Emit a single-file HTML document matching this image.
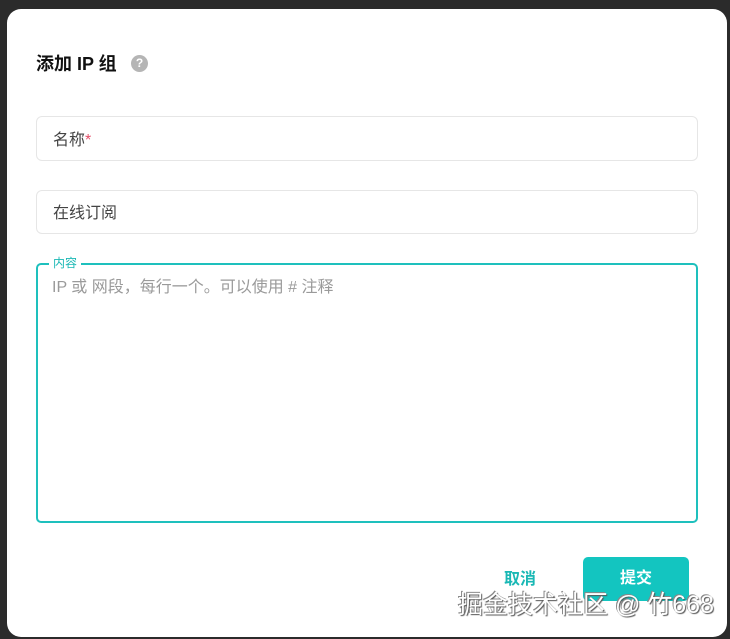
<!DOCTYPE html>
<html><head><meta charset="utf-8"><style>
*{box-sizing:border-box;margin:0;padding:0}
html,body{width:730px;height:639px;overflow:hidden}
body{background:#2b2b2b;position:relative;font-family:"Liberation Sans","Noto Sans CJK SC",sans-serif}
.panel{position:absolute;left:7px;top:9px;width:720px;height:628px;background:#fff;border-radius:14px}
.title{position:absolute;left:36px;top:50px;font-size:18px;font-weight:bold;color:#111}
.q{position:absolute;left:131px;top:55px;width:17px;height:17px;border-radius:50%;background:#b5b5b5;color:#fff;font-size:12px;font-weight:bold;text-align:center;line-height:17px}
.in{position:absolute;left:36px;width:662px;border:1px solid #e6e6e6;border-radius:6px;font-size:16px;color:#444;padding-left:16px}
.ta{position:absolute;left:36px;top:263px;width:662px;height:260px;border:2px solid #1ec0bd;border-radius:5px}
.lab{position:absolute;left:49px;top:254px;background:#fff;padding:0 4px;font-size:12px;color:#1ab8b5}
.ph{position:absolute;left:52px;top:273px;font-size:16px;color:#9a9a9a}
.cancel{position:absolute;left:504px;top:565px;font-size:16px;font-weight:bold;color:#1ab8b5}
.btn{position:absolute;left:583px;top:557px;width:106px;height:44px;background:#13c5c0;border-radius:5px;color:#fff;font-size:16px;font-weight:bold;text-align:center;line-height:44px}
.wm{position:absolute;left:458px;top:585px;font-size:25px;color:#fff;text-shadow:1px 1px 1px #555,-1px -1px 0 #888}
</style></head><body>
<div class="panel"></div>
<div class="title">添加 IP 组</div>
<div class="q">?</div>
<div class="in" style="top:116px;height:45px;line-height:47px">名称<span style="color:#e4506a">*</span></div>
<div class="in" style="top:190px;height:44px;line-height:46px">在线订阅</div>
<div class="ta"></div>
<div class="lab">内容</div>
<div class="ph">IP 或 网段，每行一个。可以使用 # 注释</div>
<div class="cancel">取消</div>
<div class="btn">提交</div>
<div class="wm">掘金技术社区 @ 竹668</div>
</body></html>
